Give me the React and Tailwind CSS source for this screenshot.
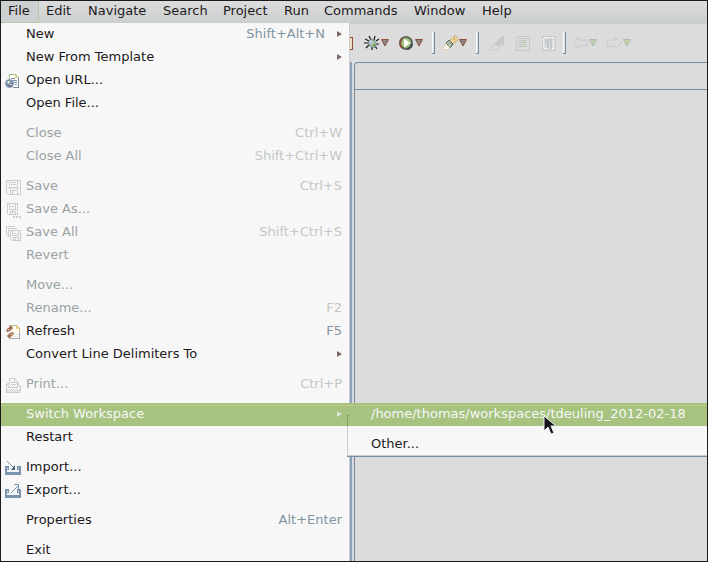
import React from 'react';

const menus = [
  ['File', 'w-[38px] bg-[#cdd0d0] border-b border-r border-dotted border-[#a6c380]'],
  ['Edit', 'w-[42px]'],
  ['Navigate', 'w-[75px]'],
  ['Search', 'w-[60px]'],
  ['Project', 'w-[61px]'],
  ['Run', 'w-[40px]'],
  ['Commands', 'w-[90px]'],
  ['Window', 'w-[68px]'],
  ['Help', 'w-[46px]'],
];

const groups = [
  [
    { label: 'New', keys: 'Shift+Alt+N', sub: true },
    { label: 'New From Template', sub: true },
    { label: 'Open URL...', icon: 'url' },
    { label: 'Open File...' },
  ],
  [
    { label: 'Close', keys: 'Ctrl+W', off: true },
    { label: 'Close All', keys: 'Shift+Ctrl+W', off: true },
  ],
  [
    { label: 'Save', keys: 'Ctrl+S', off: true, icon: 'save' },
    { label: 'Save As...', off: true, icon: 'saveAs' },
    { label: 'Save All', keys: 'Shift+Ctrl+S', off: true, icon: 'saveAll' },
    { label: 'Revert', off: true },
  ],
  [
    { label: 'Move...', off: true },
    { label: 'Rename...', keys: 'F2', off: true },
    { label: 'Refresh', keys: 'F5', icon: 'refresh' },
    { label: 'Convert Line Delimiters To', sub: true },
  ],
  [{ label: 'Print...', keys: 'Ctrl+P', off: true, icon: 'print' }],
  [{ label: 'Switch Workspace', sub: true, active: true }, { label: 'Restart' }],
  [
    { label: 'Import...', icon: 'import' },
    { label: 'Export...', icon: 'export' },
  ],
  [{ label: 'Properties', keys: 'Alt+Enter' }],
  [{ label: 'Exit' }],
];

const Svg = ({ children, w = 16, h = 16 }) => (
  <svg width={w} height={h} viewBox={`0 0 ${w} ${h}`} fill="none" shapeRendering="crispEdges" className="shrink-0" aria-hidden="true">
    {children}
  </svg>
);

const icons = {
  url: (
    <>
      <path d="M4.500 8V1.500h6l3 3v10H8" fill="#fff" stroke="#a4bb8c" />
      <path d="M13.500 5v9.500H8" stroke="#758da4" />
      <path d="M10 2v3h3z" fill="#f0d28c" />
      <path d="M6 5.500h4M7 7.500h5M9 9.500h3M10 11.500h2" stroke="#7890a9" />
      <circle cx="4.500" cy="10.500" r="4" fill="#7890a9" stroke="#8ba1b9" shapeRendering="auto" />
      <path d="M2 9l2-2 1 2-2 2zM5 11h2l-1 2z" fill="#dbe0d2" />
      <path d="M3 12l2 2 3-3" stroke="#6b6a70" />
    </>
  ),
  save: (
    <g stroke="#c9cdcf">
      <path d="M1.500 1.500h14v14h-12l-2-2zM4.500 2v6h8V2M5.500 15v-4h7v4M7.500 12v3M6 3.500h5M6 5.500h5" />
      <path d="M3 9.500h11" strokeDasharray="1 1" />
    </g>
  ),
  saveAs: (
    <g stroke="#c9cdcf">
      <path d="M2.500 1.500h10v11h-9l-1-1zM4.500 2v5h6V2M5.500 12V9.500h5V12M7.500 10v2M6 4.500h3" />
      <path d="M8 15h2M11 15h2M14 15h2" strokeWidth="2" />
    </g>
  ),
  saveAll: (
    <g stroke="#c9cdcf">
      <path d="M1.500 10V1.500h8l1 1M3.500 12V3.500h8l1 1M2 10.500h1" />
      <path d="M5.500 5.500h10v10h-8l-2-2zM7.500 6v4h6V6M8.500 15v-3h5v3M9 8.500h3M10.500 13v2" />
    </g>
  ),
  refresh: (
    <>
      <path d="M6.500 3V1.500h5l3 3v10h-9" fill="#fffdf2" stroke="#b8c07c" />
      <path d="M14.500 9v5.500H6" stroke="#9aacbd" />
      <path d="M11 2v3h3z" fill="#f0d28c" />
      <path d="M8 12h6M9 10h5" stroke="#dcdcdc" strokeDasharray="1 1" />
      <g stroke="#8a5038" shapeRendering="auto">
        <path d="M2 7.500V5.500L4 4h3M5 1.500L7.500 4 5 6.500zM8 8.500v2L6 12H3M5 9.500L2.500 12 5 14.500z" fill="#e8c999" />
        <path d="M2 7.500l3-1M8 8.500l-3 1" />
      </g>
    </>
  ),
  print: (
    <g stroke="#c9cdcf">
      <path d="M4.500 8V1.500h5l3 3V8M9.500 2v3h3M6 5.500h3M6 7.500h5" />
      <path d="M4 6.500H2.500L1 9.500v4l1 2h12l1-2v-4l-2-3M3.500 8v2.500h9V8" />
      <path d="M2 12.500h12M2 14.500h12" strokeDasharray="1 1" />
      <path d="M3 13.500h12" strokeDasharray="1 1" />
    </g>
  ),
  import: (
    <>
      <path d="M0 6h4v4H2v2h12v-2h-2V6h4v9H0z" fill="#7b94ad" />
      <path d="M2 8h1v1H2zM13 8h1v1h-1z" fill="#f7f7f7" />
      <path d="M2 1l7 7" stroke="#7b94ad" shapeRendering="auto" />
      <path d="M10 5v5H6z" fill="#4d6479" shapeRendering="auto" />
    </>
  ),
  export: (
    <>
      <path d="M0 6h4v4H2v2h12v-2h-2V6h4v9H0z" fill="#7b94ad" />
      <path d="M2 8h1v1H2zM13 8h1v1h-1z" fill="#f7f7f7" />
      <path d="M6 10l7-7M9 1.500h4.500V6" stroke="#7b94ad" shapeRendering="auto" />
    </>
  ),
};

const Row = ({ item }) => (
  <button
    type="button"
    role="menuitem"
    disabled={item.off}
    className={`relative flex h-[23px] w-full items-center pl-1 text-left ${item.active ? 'bg-[#a6c380] text-[#f7f7f7]' : item.off ? 'text-[#9aa2a4]' : 'text-[#1c1a1c]'}`}
  >
    {item.active && <span className="absolute inset-x-0 top-[2px] border-t border-dotted border-[#d9cf8c]" />}
    <span className="flex w-[21px] shrink-0 items-center">{item.icon && <Svg>{icons[item.icon]}</Svg>}</span>
    <span className="grow pb-[2px]">{item.label}</span>
    {item.keys && (
      <span className={`pb-[2px] ${item.sub ? 'mr-3' : 'mr-[7px]'} ${item.off ? 'text-[#c3c8c4]' : 'text-[#8394a0]'}`}>{item.keys}</span>
    )}
    {item.sub && (
      <span className="mr-[7px] flex pb-[2px]">
        <Svg w={5} h={6}>
          <path d="M0 0l5 3-5 3z" fill={item.active ? '#dfe5df' : '#806b66'} shapeRendering="auto" />
        </Svg>
      </span>
    )}
  </button>
);

const Arrow = ({ soft }) => (
  <Svg w={8} h={8}>
    {soft ? (
      <path d="M.5 .5h7L4 7z" fill="#c3d0a8" stroke="#8aa0a8" strokeDasharray="1 1" shapeRendering="auto" />
    ) : (
      <path d="M.5 .5h7L4 7z" fill="#8b8684" stroke="#8a5038" shapeRendering="auto" />
    )}
  </Svg>
);

const Tool = ({ label, children, arrow, soft }) => (
  <button type="button" aria-label={label} className="flex items-center gap-px">
    <Svg>{children}</Svg>
    {arrow && <Arrow soft={soft} />}
  </button>
);

const Divider = () => (
  <span className="flex h-[22px] w-[3px] border-r border-b border-[#758da4]">
    <span className="w-px bg-white" />
  </span>
);

const Toolbar = () => (
  <div className="flex h-[38px] shrink-0 items-center pl-[349px]">
    <span className="h-[13px] w-[3px] border border-l-0 border-[#8a5038] bg-[#ecdcc0]" />
    <div className="w-[11px]" />
    <Tool label="Debug" arrow>
      <g shapeRendering="auto">
        <path d="M7 5L5 1M10 5l1-4M5 6L1 4M5 8H0M5 10l-3 3M8 12v3M11 11l2 3M12 9h3M12 6l3-2" stroke="#1c1a1c" strokeWidth="1.200" />
        <ellipse cx="8.500" cy="8.500" rx="3.200" ry="4.200" fill="#a9c4a0" stroke="#607c87" transform="rotate(-45 8.500 8.500)" />
        <circle cx="7" cy="7" r="2" fill="#b9cad6" />
        <path d="M9 10h2" stroke="#7c9c45" strokeWidth="2" />
      </g>
    </Tool>
    <div className="w-[9px]" />
    <Tool label="Run" arrow>
      <g shapeRendering="auto">
        <circle cx="8" cy="8" r="6" fill="#a6c380" stroke="#59695a" strokeWidth="2" />
        <path d="M4 3.500a6 6 0 0 0 1 9.500" stroke="#8a5038" strokeWidth="2" />
        <path d="M9 14a6 6 0 0 0 5-5" stroke="#3e4954" strokeWidth="2" />
        <path d="M6 3.500v9L12 8z" fill="#fff" />
      </g>
    </Tool>
    <div className="w-[9px]" />
    <Divider />
    <div className="w-[7px]" />
    <Tool label="Search" arrow>
      <g shapeRendering="auto">
        <path d="M7 6l5-5h2l2 2v2l-6 5z" fill="#ecd394" stroke="#c9ae78" />
        <path d="M12 4h1" stroke="#8a5038" />
        <path d="M4 8l3-3 4 4-3 4z" fill="#b5cda6" stroke="#59695a" />
        <path d="M6 7l4 3" stroke="#7890a9" />
        <path d="M1 14l3-5 4 4-3 2z" fill="#fff" stroke="#e5d3a0" />
      </g>
    </Tool>
    <div className="w-[9px]" />
    <Divider />
    <div className="w-[10px]" />
    <Tool label="Mark occurrences">
      <g shapeRendering="auto">
        <path d="M5 9l8-8h2v9l-5 2z" fill="#c5c9cb" />
        <path d="M5 9l-2 3v3h5l3-3M0 14.500h1" stroke="#c5c9cb" />
        <path d="M10 9h3" stroke="#ddd5ba" />
      </g>
    </Tool>
    <div className="w-[9px]" />
    <Tool label="Block selection">
      <path d="M2 1h13v14H2z" stroke="#c5c9cb" />
      <path d="M4 3.500h9M4 5.500h9M4 7.500h9M4 9.500h9M4 11.500h9" stroke="#c5c9cb" />
      <path d="M10.500 5v7M6 11.500h4M7 7.500h3" stroke="#a6c380" strokeDasharray="1 1" />
    </Tool>
    <div className="w-[10px]" />
    <Tool label="Show whitespace">
      <path d="M2 1h13v14H2z" stroke="#c5c9cb" />
      <path d="M3.500 2.500h10v11h-10z" stroke="#fff" strokeDasharray="1 1" />
      <path d="M5 4h8v1h-1v9h-2V6H9v8H7v-4H6L5 8z" fill="#c5c9cb" />
    </Tool>
    <div className="w-[7px]" />
    <Divider />
    <div className="w-[6px]" />
    <Tool label="Back" arrow soft>
      <path d="M1 8l6-6v3h8v6H7v3z" stroke="#c5c9cb" shapeRendering="auto" />
    </Tool>
    <div className="w-[9px]" />
    <Tool label="Forward" arrow soft>
      <path d="M15 8L9 2v3H1v6h8v3z" stroke="#c5c9cb" shapeRendering="auto" />
    </Tool>
  </div>
);

export default function App() {
  return (
    <div className="relative flex h-screen flex-col overflow-hidden border border-[#1c1a1c] bg-[#dcdcdc] font-['DejaVu_Sans',sans-serif] text-[13px] leading-[20px]">
      <nav className="flex h-[23px] shrink-0 bg-linear-to-b from-[#dcdcdc] to-[#cbcece] text-[#1c1a1c]">
        {menus.map(([label, style]) => (
          <button key={label} type="button" className={`flex h-[22px] shrink-0 items-start pl-[7px] ${style}`}>
            {label}
          </button>
        ))}
      </nav>
      <Toolbar />
      <main className="flex grow pl-[349px]">
        <div className="w-[2px] bg-[#8da2b6]" />
        <div className="w-[2px]" />
        <section className="grow rounded-tl-sm border-t border-l border-[#758da4]">
          <div className="h-[27px] border-b border-[#758da4]" />
        </section>
      </main>

      <div role="menu" className="absolute top-[22px] left-0 w-[349px] border-r border-[#c9cdcf] bg-[#f7f7f7]">
        {groups.map((group, i) => (
          <div key={i} className={i ? 'pt-[7px]' : ''}>
            {group.map((item) => <Row key={item.label} item={item} />)}
          </div>
        ))}
      </div>

      <div role="menu" className="absolute top-[402px] right-0 left-[346px] border-b border-[#758da4] bg-[#f7f7f7]">
        <button type="button" role="menuitem" className="relative flex h-[23px] w-full items-center bg-[#a6c380] pb-[2px] pl-6 text-left text-[#f7f7f7]">
          <span className="absolute inset-x-0 top-[2px] border-t border-dotted border-[#d9cf8c]" />
          <span className="absolute top-[12px] bottom-0 left-0 border-l border-dotted border-[#6d7a4c]" />
          /home/thomas/workspaces/tdeuling_2012-02-18
        </button>
        <div className="border-b border-l border-[#c9cdcf] pt-[7px]">
          <button type="button" role="menuitem" className="flex h-[22px] w-full items-center pb-px pl-[23px] text-left text-[#1c1a1c]">
            Other...
          </button>
        </div>
      </div>

      <svg width="14" height="20" viewBox="0 0 14 20" className="absolute top-[414px] left-[542px]" aria-hidden="true">
        <path d="M1 1v15l4-4 3 7 3-1-3-7h5z" fill="#15131a" stroke="#eef1f4" />
      </svg>
    </div>
  );
}
